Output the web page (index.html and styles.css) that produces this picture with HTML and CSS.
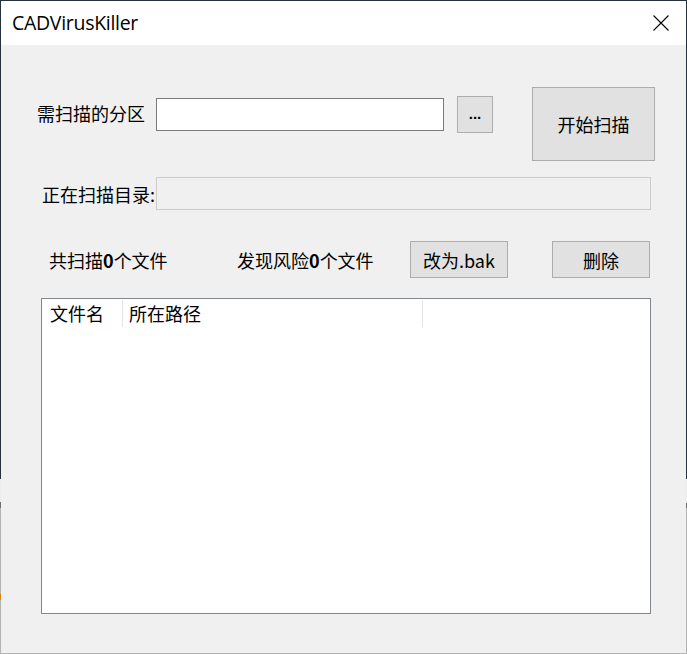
FILE: index.html
```html
<!DOCTYPE html>
<html lang="zh-CN">
<head>
<meta charset="utf-8">
<title>CADVirusKiller</title>
<link rel="stylesheet" href="styles.css">
</head>
<body>
<div class="window">
  <div class="titlebar">
    <span class="title">CADVirusKiller</span>
    <span class="close" aria-label="关闭">
      <svg width="16" height="16" viewBox="0 0 16 16"><path d="M0.5 0.5 L15.5 15.5 M15.5 0.5 L0.5 15.5" stroke="#000" stroke-width="1.1" fill="none"/></svg>
    </span>
  </div>
  <div class="client">
    <div class="row row-1">
      <div class="pick">
        <label class="lbl lbl-drive">需扫描的分区</label>
        <input class="field field-drive" type="text">
        <button class="btn btn-browse">...</button>
      </div>
      <button class="btn btn-start">开始扫描</button>
    </div>
    <div class="row row-2">
      <label class="lbl lbl-dir">正在扫描目录:</label>
      <input class="field field-dir" type="text" disabled>
    </div>
    <div class="row row-3">
      <span class="lbl stat stat-total">共扫描<b class="num">0</b>个文件</span>
      <span class="lbl stat stat-risk">发现风险<b class="num">0</b>个文件</span>
      <button class="btn btn-small">改为.bak</button>
      <button class="btn btn-small btn-del">删除</button>
    </div>
    <div class="list">
      <div class="list-head">
        <div class="col col-name">文件名</div>
        <div class="col col-path">所在路径</div>
        <div class="col col-rest"></div>
      </div>
    </div>
  </div>
</div>
</body>
</html>
```

FILE: styles.css
```css
html, body {
  margin: 0;
  padding: 0;
  background: #f0f0f0;
}

.window {
  width: 687px;
  height: 654px;
  box-sizing: border-box;
  border: 1px solid transparent;
  display: flex;
  flex-direction: column;
  font-family: "Noto Sans CJK SC", "Noto Sans", sans-serif;
  color: #000;
  background:
    linear-gradient(to bottom, #27303c 0 479px, #ececec 479px 502px, #6e6e6e 502px 508px, #b4b4b4 508px 594px, #d4861c 594px 600px, #b4b4b4 600px) left top / 1px 100% no-repeat border-box,
    linear-gradient(to bottom, #27303c 0 479px, #ececec 479px 503px, #6e6e6e 503px 508px, #b4b4b4 508px) right top / 1px 100% no-repeat border-box,
    linear-gradient(#27303c, #27303c) left top / 100% 1px no-repeat border-box,
    linear-gradient(#b4b4b4, #b4b4b4) left bottom / 100% 1px no-repeat border-box,
    #f0f0f0;
}

.titlebar {
  height: 44px;
  background: #fff;
  display: flex;
  align-items: center;
  justify-content: space-between;
  flex: none;
}

.title {
  font-family: "Open Sans", "Noto Sans", sans-serif;
  font-size: 19.5px;
  letter-spacing: -0.3px;
  margin-left: 11px;
  margin-top: -1px;
}

.close {
  display: flex;
  width: 16px;
  height: 16px;
  margin-right: 17px;
}

.client {
  flex: 1;
  display: flex;
  flex-direction: column;
}

.lbl {
  font-size: 18px;
  line-height: 24px;
  white-space: nowrap;
}

.num {
  font-weight: 600;
}

.field {
  box-sizing: border-box;
  margin: 0;
  padding: 0 4px;
  font: inherit;
  outline: none;
}

.btn {
  box-sizing: border-box;
  margin: 0;
  padding: 0;
  font-family: "Noto Sans CJK SC", "Noto Sans", sans-serif;
  font-size: 18px;
  color: #000;
  background: #e1e1e1;
  border: 1px solid #adadad;
  border-radius: 0;
}

.row {
  display: flex;
}

.row-1 {
  margin-top: 42px;
  align-items: flex-start;
}

.pick {
  display: flex;
  align-items: center;
  margin-top: 9px;
  height: 37px;
  padding-left: 36px;
}

.lbl-drive {
  width: 119px;
  margin-top: -3px;
}

.field-drive {
  width: 288px;
  height: 33px;
  background: #fff;
  border: 1px solid #7a7a7a;
}

.btn-browse {
  width: 36px;
  height: 37px;
  margin-left: 13px;
  font-family: "Liberation Sans", sans-serif;
  font-size: 15px;
  font-weight: bold;
  line-height: 1;
  padding-bottom: 2px;
}

.btn-start {
  width: 123px;
  height: 74px;
  margin-left: 39px;
}

.row-2 {
  margin-top: 16px;
  align-items: center;
  padding-left: 41px;
}

.lbl-dir {
  width: 114px;
}

.field-dir {
  width: 495px;
  height: 33px;
  background: #f0f0f0;
  border: 1px solid #cccccc;
}

.row-3 {
  margin-top: 31px;
  align-items: center;
  padding-left: 48px;
}

.stat-total {
  width: 188px;
}

.stat-risk {
  width: 173px;
}

.btn-small {
  width: 98px;
  height: 37px;
}

.btn-del {
  margin-left: 44px;
}

.list {
  margin-top: 20px;
  margin-left: 40px;
  width: 610px;
  height: 316px;
  box-sizing: border-box;
  background: #fff;
  border: 1px solid #828790;
}

.list-head {
  display: flex;
  height: 29px;
}

.col {
  font-size: 18px;
  white-space: nowrap;
}

.col-name {
  width: 81px;
  padding-left: 8px;
  box-sizing: border-box;
  border-right: 1px solid #e5e5e5;
  margin: 1px 0;
  line-height: 27px;
}

.col-path {
  width: 300px;
  padding-left: 6px;
  box-sizing: border-box;
  border-right: 1px solid #e5e5e5;
  margin: 1px 0;
  line-height: 27px;
}

.col-rest {
  flex: 1;
}
```
